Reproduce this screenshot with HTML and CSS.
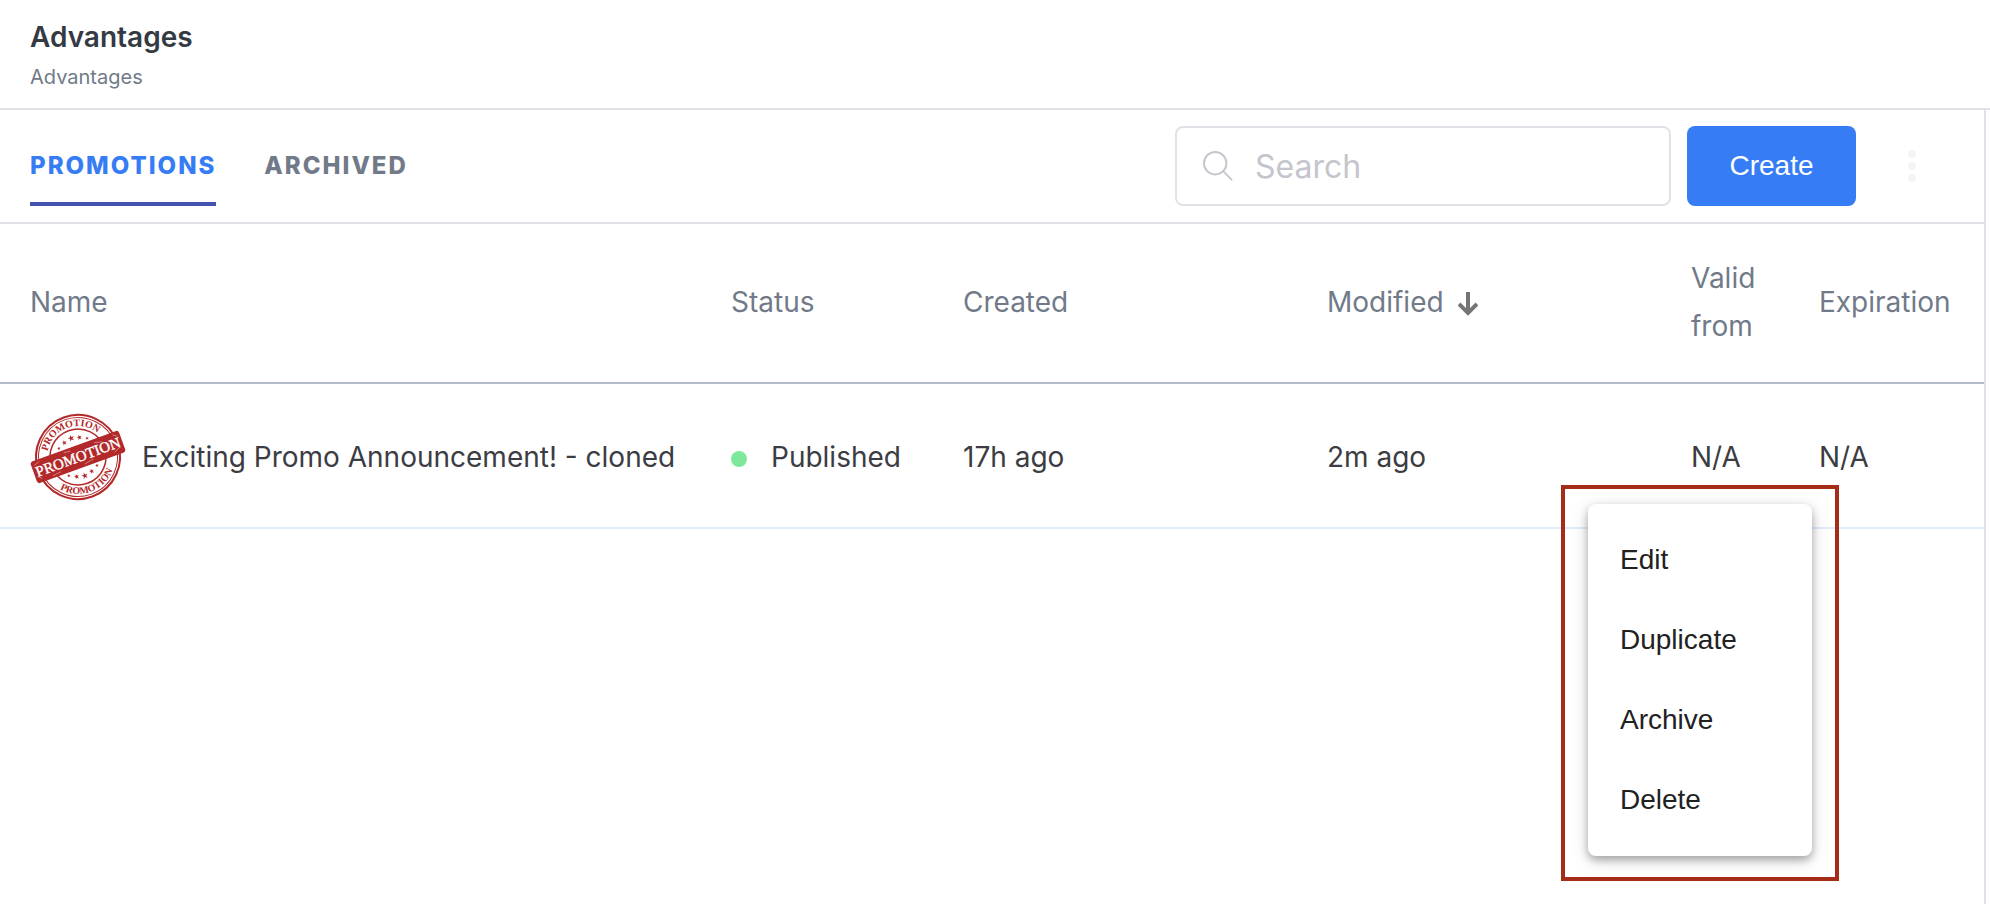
FILE: index.html
```html
<!DOCTYPE html>
<html lang="en">
<head>
  <meta charset="UTF-8">
  <meta name="viewport" content="width=device-width, initial-scale=1.0">
  <title>Advantages</title>
  <link rel="stylesheet" href="styles.css">
</head>
<body>
  <header class="page-header">
    <h1>Advantages</h1>
    <p>Advantages</p>
  </header>

  <main class="content">
    <div class="toolbar">
      <nav class="tabs">
        <a href="#promotions" class="tab active">Promotions</a>
        <a href="#archived" class="tab">Archived</a>
      </nav>
      <label class="search">
        <svg width="30" height="30" viewBox="0 0 32 32" fill="none" stroke="#c5c5cd" stroke-width="2">
          <circle cx="13" cy="13" r="12"/>
          <path d="M21 21l10 10"/>
        </svg>
        <input type="text" placeholder="Search" aria-label="Search">
      </label>
      <button type="button" class="btn-create">Create</button>
      <button type="button" class="btn-more" aria-label="More">
        <svg width="8" height="32" viewBox="0 0 8 32" fill="#f3f4f6">
          <circle cx="4" cy="4" r="4"/>
          <circle cx="4" cy="16" r="4"/>
          <circle cx="4" cy="28" r="4"/>
        </svg>
      </button>
    </div>

    <div class="list">
      <table>
        <thead>
          <tr>
            <th class="col-name">Name</th>
            <th class="col-status">Status</th>
            <th class="col-date">Created</th>
            <th class="col-date">Modified
              <svg class="sort" width="20" height="24" viewBox="0 0 20 24" fill="none" stroke="#757575" stroke-width="4">
                <path d="M10 0v21M1 12l9 9 9-9"/>
              </svg>
            </th>
            <th class="col-valid">Valid from</th>
            <th>Expiration</th>
          </tr>
        </thead>
        <tbody>
          <tr>
            <td>
              <div class="promo">
                <svg class="stamp" width="96" height="96" viewBox="-48 -48 96 96">
                  <defs>
                    <path id="arcTop" d="M-31 0A31 31 0 0 1 31 0"/>
                    <path id="arcBottom" d="M-37 0A37 37 0 0 0 37 0"/>
                    <path id="star" d="M0-3.4L.8-1.1 3.2-1.1 1.3.4 2 2.8 0 1.4-2 2.8-1.3.4-3.2-1.1-.8-1.1z"/>
                  </defs>
                  <g transform="rotate(-20)" fill="#b3292a">
                    <circle r="42" fill="none" stroke="#b3292a" stroke-width="2"/>
                    <circle r="39.5" fill="none" stroke="#b3292a" stroke-width="1"/>
                    <circle r="28" fill="none" stroke="#b3292a" stroke-width="1.5"/>
                    <text class="ring-text"><textPath href="#arcTop" startOffset="50%">PROMOTION</textPath></text>
                    <text class="ring-text"><textPath href="#arcBottom" startOffset="50%">PROMOTION</textPath></text>
                    <use href="#star" y="-20"/>
                    <use href="#star" transform="translate(-8 -18) scale(.8)"/>
                    <use href="#star" transform="translate(8 -18) scale(.8)"/>
                    <use href="#star" transform="translate(-15 -14.500) scale(.55)"/>
                    <use href="#star" transform="translate(15 -14.500) scale(.55)"/>
                    <use href="#star" y="20"/>
                    <use href="#star" transform="translate(-8 18) scale(.8)"/>
                    <use href="#star" transform="translate(8 18) scale(.8)"/>
                    <use href="#star" transform="translate(-15 14.500) scale(.55)"/>
                    <use href="#star" transform="translate(15 14.500) scale(.55)"/>
                    <rect x="-47" y="-11.500" width="94" height="23" rx="3"/>
                    <text class="band-text" y="5">PROMOTION</text>
                    <path d="M-44-7l6-2M-30 9l9-1M-12-9l7 1M4 9l10-2M20-8l8 2M36 8l7-3M-44 5l3 3M40-9l4 3" stroke="#e3a9a6" stroke-width=".6"/>
                  </g>
                </svg>
                <span>Exciting Promo Announcement! - cloned</span>
              </div>
            </td>
            <td><span class="dot"></span>Published</td>
            <td>17h ago</td>
            <td>2m ago</td>
            <td>N/A</td>
            <td>N/A</td>
          </tr>
        </tbody>
      </table>

      <div class="menu-frame">
        <div class="menu">
          <button type="button">Edit</button>
          <button type="button">Duplicate</button>
          <button type="button">Archive</button>
          <button type="button">Delete</button>
        </div>
      </div>
    </div>
  </main>
</body>
</html>
```
FILE: styles.css
```css
* {
  box-sizing: border-box;
}

body {
  margin: 0;
  min-height: 100vh;
  display: flex;
  flex-direction: column;
  background-color: #fff;
  color: #3c3c43;
  font-family: Inter, sans-serif;
  font-size: 28px;
  line-height: 48px;
}

.page-header {
  padding: 16px 30px 12px;
  border-bottom: 2px solid #dfe3e9;
}

.page-header h1 {
  margin: 0;
  font-size: 28px;
  font-weight: 600;
  line-height: 42px;
  color: #343a43;
}

.page-header p {
  margin: 0;
  font-size: 20px;
  line-height: 38px;
  color: #717a89;
}

.content {
  flex: 1;
  margin-right: 4px;
  border-right: 2px solid #dfe3e9;
}

.toolbar {
  display: flex;
  align-items: center;
  gap: 16px;
  height: 114px;
  padding: 0 32px 0 30px;
  border-bottom: 2px solid #dfe3e9;
}

.tabs {
  display: flex;
  gap: 48px;
  margin-right: auto;
}

.tab {
  height: 80px;
  border-bottom: 4px solid transparent;
  color: #717a89;
  font-size: 24px;
  font-weight: 800;
  line-height: 80px;
  letter-spacing: 2px;
  text-transform: uppercase;
  text-decoration: none;
}

.tab.active {
  color: #367cf4;
  border-bottom-color: #4453b0;
}

.search {
  display: flex;
  align-items: center;
  gap: 22px;
  width: 496px;
  height: 80px;
  padding: 0 26px;
  border: 2px solid #dfe3e9;
  border-radius: 8px;
}

.search input {
  flex: 1;
  min-width: 0;
  padding: 0;
  border: none;
  outline: none;
  background: none;
  font-family: Inter, sans-serif;
  font-size: 32px;
}

.search input::placeholder {
  color: #c5c5cd;
}

.btn-create {
  width: 169px;
  height: 80px;
  border: none;
  border-radius: 8px;
  background-color: #367cf4;
  color: #fff;
  font-family: "Liberation Sans", Arial, sans-serif;
  font-size: 28px;
  cursor: pointer;
}

.btn-more {
  display: flex;
  justify-content: center;
  width: 80px;
  padding: 0;
  border: none;
  background: none;
  cursor: pointer;
}

.list {
  position: relative;
}

table {
  width: 100%;
  table-layout: fixed;
  border-collapse: separate;
  border-spacing: 0;
}

th, td {
  padding: 0 0 0 30px;
  text-align: left;
  font-weight: 400;
}

th {
  height: 160px;
  padding-bottom: 2px;
  border-bottom: 2px solid #b3bbca;
  color: #717a89;
}

td {
  height: 145px;
  padding-top: 2px;
  border-bottom: 2px solid #e2ebfb;
  white-space: nowrap;
}

.col-name {
  width: 701px;
}

.col-status {
  width: 232px;
}

.col-date {
  width: 364px;
}

.col-valid {
  width: 128px;
}

.sort {
  margin-left: 6px;
  vertical-align: -4px;
}

.promo {
  display: flex;
  align-items: center;
  gap: 16px;
}

.stamp {
  flex: none;
}

.ring-text {
  font-family: "Liberation Serif", serif;
  font-size: 10px;
  font-weight: 700;
  text-anchor: middle;
}

.band-text {
  fill: #fff;
  stroke: #fff;
  stroke-width: 0.4;
  font-family: "Liberation Serif", serif;
  font-size: 15px;
  text-anchor: middle;
}

.dot {
  display: inline-block;
  width: 16px;
  height: 16px;
  margin-right: 24px;
  border-radius: 50%;
  background-color: #7de89b;
}

.menu-frame {
  position: absolute;
  top: 261px;
  right: 145px;
  width: 278px;
  padding: 15px 23px 21px;
  border: 4px solid #a52d18;
}

.menu {
  padding: 16px 0;
  border-radius: 8px;
  background-color: #fff;
  box-shadow: 0 4px 8px rgba(0, 0, 0, 0.3), 0 4px 20px rgba(0, 0, 0, 0.12);
}

.menu button {
  display: block;
  width: 100%;
  height: 80px;
  padding: 0 32px;
  border: none;
  background: none;
  color: #212121;
  font-family: "Liberation Sans", Arial, sans-serif;
  font-size: 28px;
  text-align: left;
  cursor: pointer;
}

.menu button:hover {
  background-color: #f5f5f5;
}
```
